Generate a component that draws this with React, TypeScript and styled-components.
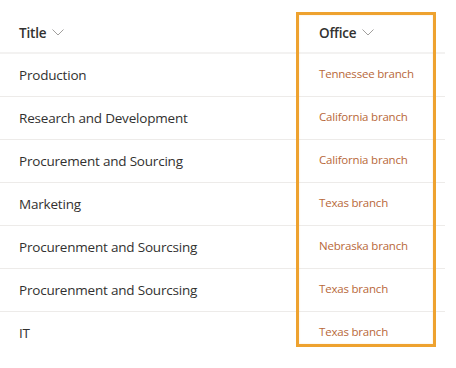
import React from 'react'
import styled, { createGlobalStyle } from 'styled-components'

const GlobalStyle = createGlobalStyle`
  body {
    margin: 0;
    background: #ffffff;
    font-family: "Open Sans", "Noto Sans", sans-serif;
  }
`

const rows = [
  { title: 'Production', office: 'Tennessee branch' },
  { title: 'Research and Development', office: 'California branch' },
  { title: 'Procurement and Sourcing', office: 'California branch' },
  { title: 'Marketing', office: 'Texas branch' },
  { title: 'Procurenment and Sourcsing', office: 'Nebraska branch' },
  { title: 'Procurenment and Sourcsing', office: 'Texas branch' },
  { title: 'IT', office: 'Texas branch' },
]

const Chevron: React.FC = () => (
  <svg width="12" height="7" viewBox="0 0 12 7" fill="none">
    <polyline points="0.5,0.5 6,6 11.5,0.5" stroke="#a19f9d" strokeWidth="1" />
  </svg>
)

export default function App() {
  return (
    <>
      <GlobalStyle />
      <Wrapper>
        <List>
          <HeaderRow>
            <HeaderCell>
              Title <Chevron />
            </HeaderCell>
            <HeaderCell $office>
              Office <Chevron />
            </HeaderCell>
          </HeaderRow>
          {rows.map((r, i) => (
            <Row key={i} $last={i === rows.length - 1}>
              <TitleCell>{r.title}</TitleCell>
              <OfficeCell>{r.office}</OfficeCell>
            </Row>
          ))}
        </List>
        <Highlight />
      </Wrapper>
    </>
  )
}

const Wrapper = styled.div`
  position: relative;
  width: 456px;
  height: 368px;
  overflow: hidden;
`

const List = styled.div`
  width: 445px;
  padding-top: 13px;
`

const HeaderRow = styled.div`
  display: grid;
  grid-template-columns: 296px 1fr;
  height: 39px;
  border-bottom: 2px solid #f3f2f1;
`

const HeaderCell = styled.div<{ $office?: boolean }>`
  display: flex;
  align-items: center;
  gap: 6px;
  padding-left: ${(p) => (p.$office ? '23px' : '19px')};
  font-size: 13.5px;
  font-weight: 600;
  color: #323130;
  letter-spacing: -0.2px;
`

const Row = styled.div<{ $last?: boolean }>`
  display: grid;
  grid-template-columns: 296px 1fr;
  align-items: center;
  height: 42px;
  border-bottom: ${(p) => (p.$last ? 'none' : '1px solid #edebe9')};
`

const TitleCell = styled.div`
  padding-left: 19px;
  font-size: 13.5px;
  color: #323130;
  letter-spacing: -0.2px;
`

const OfficeCell = styled.div`
  padding-left: 23px;
  padding-bottom: 4px;
  font-size: 11.5px;
  color: #b8683a;
  letter-spacing: -0.2px;
`

const Highlight = styled.div`
  position: absolute;
  left: 296px;
  top: 12px;
  width: 140px;
  height: 335px;
  box-sizing: border-box;
  border: 3px solid #eea22f;
  box-shadow: inset 0 0 2px rgba(238, 162, 47, 0.25);
  pointer-events: none;
`
